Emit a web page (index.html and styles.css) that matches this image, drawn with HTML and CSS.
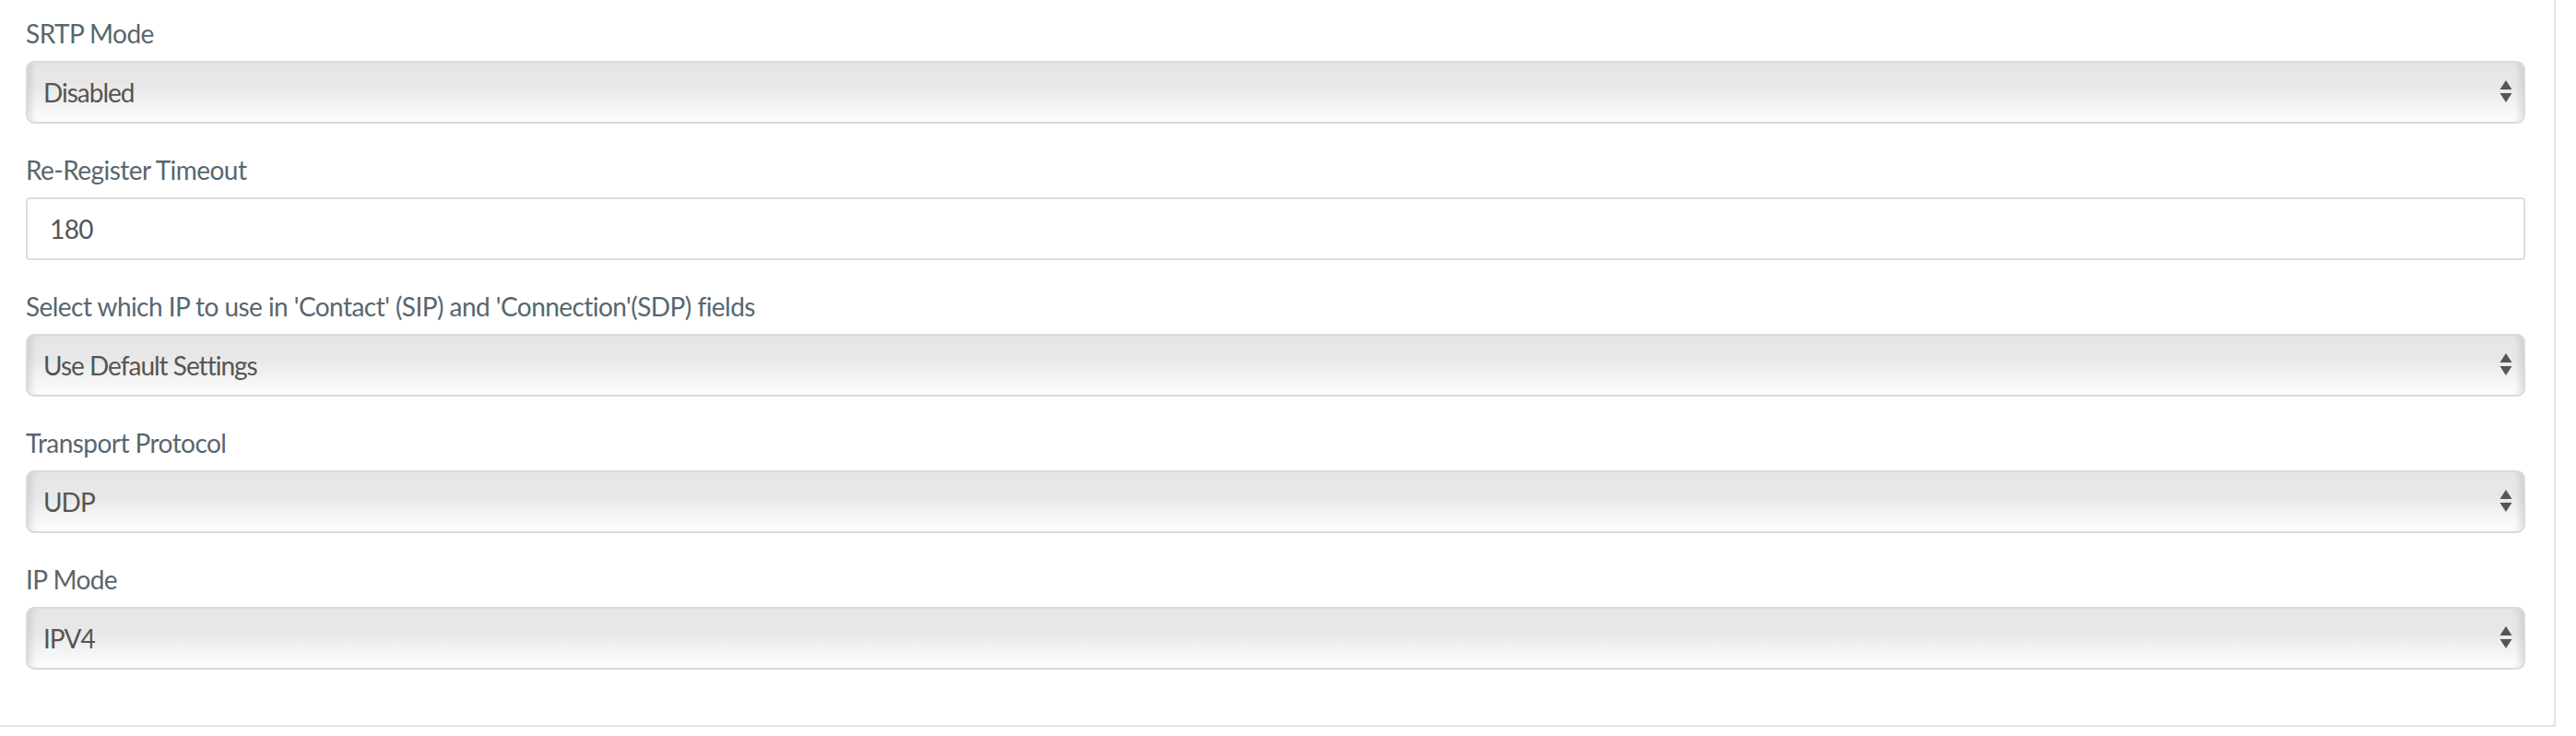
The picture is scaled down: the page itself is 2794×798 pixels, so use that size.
FILE: index.html
```html
<!DOCTYPE html>
<html>
<head>
<meta charset="utf-8">
<link rel="stylesheet" href="styles.css">
</head>
<body>
<div class="card">
  <div class="group">
    <label class="lbl">SRTP Mode</label>
    <div class="sel"><span>Disabled</span><svg class="arr" width="14" height="26" viewBox="0 0 14 26"><path d="M7 0 L13.5 10 L0.5 10 Z" fill="#555"/><path d="M0.5 14 L13.5 14 L7 24 Z" fill="#555"/></svg></div>
  </div>
  <div class="group">
    <label class="lbl">Re-Register Timeout</label>
    <div class="inp">180</div>
  </div>
  <div class="group">
    <label class="lbl">Select which IP to use in 'Contact' (SIP) and 'Connection'(SDP) fields</label>
    <div class="sel"><span>Use Default Settings</span><svg class="arr" width="14" height="26" viewBox="0 0 14 26"><path d="M7 0 L13.5 10 L0.5 10 Z" fill="#555"/><path d="M0.5 14 L13.5 14 L7 24 Z" fill="#555"/></svg></div>
  </div>
  <div class="group">
    <label class="lbl">Transport Protocol</label>
    <div class="sel"><span>UDP</span><svg class="arr" width="14" height="26" viewBox="0 0 14 26"><path d="M7 0 L13.5 10 L0.5 10 Z" fill="#555"/><path d="M0.5 14 L13.5 14 L7 24 Z" fill="#555"/></svg></div>
  </div>
  <div class="group">
    <label class="lbl">IP Mode</label>
    <div class="sel"><span>IPV4</span><svg class="arr" width="14" height="26" viewBox="0 0 14 26"><path d="M7 0 L13.5 10 L0.5 10 Z" fill="#555"/><path d="M0.5 14 L13.5 14 L7 24 Z" fill="#555"/></svg></div>
  </div>
</div>
</body>
</html>
```
FILE: styles.css
```css
html, body {
  margin: 0;
  padding: 0;
  background: #fff;
}
body {
  font-family: "Lato", "Liberation Sans", sans-serif;
  width: 2794px;
  height: 798px;
  overflow: hidden;
}
.card {
  width: 2772px;
  margin-right: 22px;
  border-right: 2px solid #dfe5e5;
  border-bottom: 2px solid #dfe5e5;
  padding: 16px 31px 60px 28px;
  box-sizing: border-box;
  display: flex;
  flex-direction: column;
  gap: 30px;
}
.group {
  display: flex;
  flex-direction: column;
  gap: 10px;
}
.lbl {
  font-size: 28px;
  line-height: 40px;
  letter-spacing: -0.55px;
  color: #58666e;
  height: 40px;
}
.sel {
  height: 68px;
  box-sizing: border-box;
  border: 2px solid #d3dddd;
  border-radius: 9px;
  background: linear-gradient(#e5e5e5 0%, #e8e8e8 40%, #f1f1f1 65%, #fdfdfd 100%);
  box-shadow: inset 10px 0 7px -6px rgba(0,0,0,0.10), inset -10px 0 7px -6px rgba(0,0,0,0.10);
  display: flex;
  align-items: center;
  justify-content: space-between;
  padding: 0 12px 0 17px;
  font-size: 28px;
  letter-spacing: -1px;
  color: #555;
}
.arr {
  display: block;
}
.inp {
  height: 68px;
  box-sizing: border-box;
  border: 2px solid #d7e0e0;
  border-radius: 4px;
  background: #fff;
  display: flex;
  align-items: center;
  padding: 0 24px;
  font-size: 28px;
  letter-spacing: -0.6px;
  color: #555;
}
```
